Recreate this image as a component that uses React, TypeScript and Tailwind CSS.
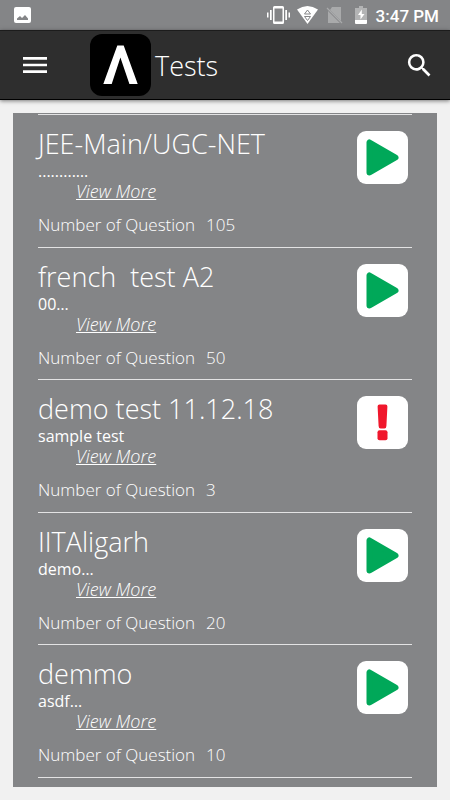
import { MdMenu, MdSearch } from 'react-icons/md'

type Test = {
  title: string
  description: string
  questions: number
  status: 'ready' | 'blocked'
}

const tests: Test[] = [
  { title: 'JEE-Main/UGC-NET', description: '.........…', questions: 105, status: 'ready' },
  { title: 'french  test A2', description: '00…', questions: 50, status: 'ready' },
  { title: 'demo test 11.12.18', description: 'sample test', questions: 3, status: 'blocked' },
  { title: 'IITAligarh', description: 'demo…', questions: 20, status: 'ready' },
  { title: 'demmo', description: 'asdf…', questions: 10, status: 'ready' },
]

function StatusBar() {
  return (
    <div className="flex h-[30px] items-center bg-[#848587] pr-[11px] pl-3.5 text-white">
      <svg className="h-4 w-[17px]" viewBox="0 0 17 16" aria-hidden="true">
        <rect width="17" height="16" rx="2" fill="#fff" />
        <path d="M3 13v-1.500L6 9l2 2 3-3 3 3.500V13z" fill="#848587" />
      </svg>
      <svg className="ml-auto h-[18px] w-[23px]" viewBox="0 0 23 18" fill="#fff" aria-hidden="true">
        <path fillRule="evenodd" d="M7.500 0h8A1.500 1.500 0 0 1 17 1.500v15A1.500 1.500 0 0 1 15.500 18h-8A1.500 1.500 0 0 1 6 16.500v-15A1.500 1.500 0 0 1 7.500 0zM7.500 2.500v13h8v-13z" />
        <path d="M3 4h1.700v10H3zM0 6.500h1.500v5H0zM18.300 4H20v10h-1.700zM21.500 6.500H23v5h-1.500z" />
      </svg>
      <svg className="ml-[7px] h-[18px] w-[21px]" viewBox="0 0 21 18" aria-hidden="true">
        <path d="M0 3.500Q10.500-3.500 21 3.500L10.500 18z" fill="#fff" />
        <path d="M7.500 8 10.500 4l3 4zM7.500 10.500h6l-3 4z" fill="#fff" stroke="#848587" />
      </svg>
      <svg className="ml-2 h-[18px] w-[17px]" viewBox="0 0 17 18" aria-hidden="true">
        <path d="M6 1h9v14L4 4zM2 5l12 12H2z" fill="#a9aaab" />
        <path d="m1 2 15 15" stroke="#a9aaab" strokeWidth="1.300" />
      </svg>
      <svg className="ml-3 h-[18px] w-3" viewBox="0 0 12 18" aria-hidden="true">
        <path d="M4 0h4v2h4v12H0V2h4z" fill="#b3b4b5" />
        <path d="M0 14h12v3q0 1-1 1H1q-1 0-1-1z" fill="#fff" />
        <path d="M6.800 3.500 3 9h2.500v4.500L9.500 8H6.800z" fill="#fff" />
      </svg>
      <span className="ml-[9px] pt-0.5 font-[Roboto,sans-serif] text-[17px] leading-5 font-medium">3:47 PM</span>
    </div>
  )
}

function Logo() {
  return (
    <svg className="h-[62px] w-[61px]" viewBox="0 0 61 62" role="img" aria-label="Logo">
      <rect width="61" height="62" rx="12" />
      <path d="M13.300 50 27.300 11.600h6.400L47.700 50h-8.300L30.400 23.500 21.700 50z" fill="#fff" />
    </svg>
  )
}

function Header() {
  return (
    <header className="flex h-[70px] items-center border-y border-t-[#1c1c1c] border-b-black bg-[#2e2e2e] px-[19px] text-white shadow-[0_1px_4px_rgba(0,0,0,0.5)]">
      <button type="button" aria-label="Menu">
        <MdMenu className="size-8" />
      </button>
      <div className="ml-[39px] flex items-center gap-1">
        <Logo />
        <h1 className="pt-0.5 text-[27px] leading-8 font-light">Tests</h1>
      </div>
      <button type="button" aria-label="Search" className="-mr-1 ml-auto">
        <MdSearch className="size-[31px]" />
      </button>
    </header>
  )
}

function StatusIcon({ status }: { status: Test['status'] }) {
  if (status === 'blocked') {
    return (
      <svg className="h-[53px] w-[51px]" viewBox="0 0 51 53" fill="#f0172c" aria-hidden="true">
        <path d="M22.500 8.500h6q2 0 1.900 2l-1 19.500q-.1 2.500-2 2.500h-3.800q-1.900 0-2-2.500l-1-19.500q-.1-2 1.900-2z" />
        <rect x="20.500" y="34.300" width="10" height="10" rx="2" />
      </svg>
    )
  }
  return (
    <svg className="h-[53px] w-[51px]" viewBox="0 0 51 53" aria-hidden="true">
      <path d="M12.500 11.500v30l26-15z" fill="#00a859" stroke="#00a859" strokeWidth="6" strokeLinejoin="round" />
    </svg>
  )
}

function TestRow({ test }: { test: Test }) {
  return (
    <li className="flex flex-1 items-start justify-between border-b border-[#e3e3e4] pr-1">
      <div className="pt-3 text-[17px] leading-[22px] font-light">
        <h2 className="text-[27px] leading-[34px] whitespace-pre">{test.title}</h2>
        <p className="text-base leading-5 font-normal">{test.description}</p>
        <a href="#" className="ml-[38px] block w-fit text-[18px] leading-5 italic underline">
          View More
        </a>
        <p className="mt-[13px] flex gap-[11px]">
          <span>Number of Question</span>
          <span>{test.questions}</span>
        </p>
      </div>
      <button
        type="button"
        aria-label={test.status === 'ready' ? `Start ${test.title}` : `${test.title} unavailable`}
        className="mt-4 rounded-[9px] bg-white"
      >
        <StatusIcon status={test.status} />
      </button>
    </li>
  )
}

export default function App() {
  return (
    <div className="flex min-h-screen flex-col bg-[#f1f1f1] font-['Open_Sans','Noto_Sans',sans-serif]">
      <StatusBar />
      <Header />
      <main className="flex flex-1 flex-col p-[13px]">
        <ul className="flex flex-1 flex-col bg-[#848587] px-[25px] pt-px pb-[9px] text-white before:h-px before:bg-[#e3e3e4] before:content-['']">
          {tests.map((test) => (
            <TestRow key={test.title} test={test} />
          ))}
        </ul>
      </main>
    </div>
  )
}
